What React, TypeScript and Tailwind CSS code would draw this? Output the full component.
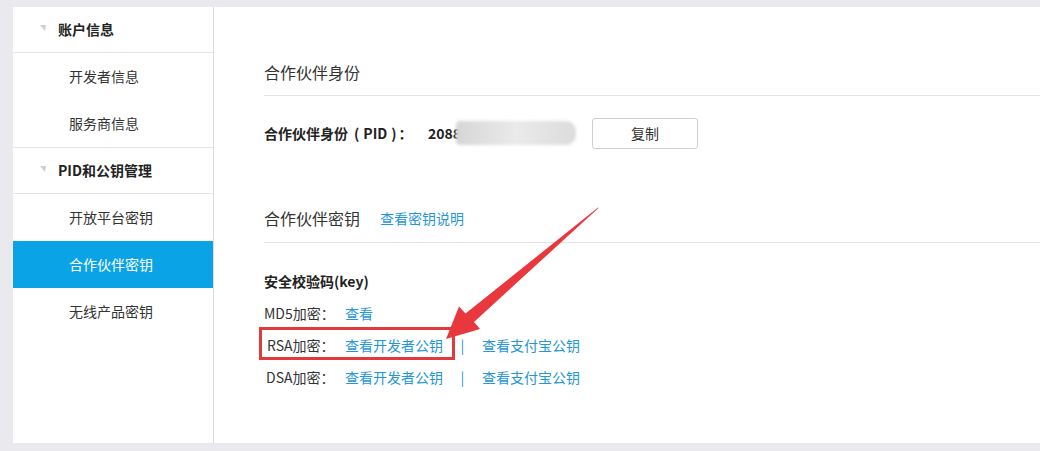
import React from "react";

const font = "font-['Noto_Sans_CJK_SC','Microsoft_YaHei',sans-serif]";

function Caret() {
  return (
    <svg width="6" height="6" viewBox="0 0 6 6" className="mr-[12px] mt-[-4px]">
      <polygon points="0,0 6,0 5,6" fill="#cfcfcf" />
    </svg>
  );
}

function SideHeader({ label }: { label: string }) {
  return (
    <div className="flex items-center h-[46px] pl-[27px] border-b border-[#e3e3e3] text-[14px] font-bold text-[#222]">
      <Caret />
      <span>{label}</span>
    </div>
  );
}

function SideItem({ label, active }: { label: string; active?: boolean }) {
  return (
    <div
      className={
        active
          ? "flex items-center h-[47px] pl-[56px] text-[14px] text-white bg-[#0aa3e6]"
          : "flex items-center h-[47px] pl-[56px] text-[14px] text-[#333]"
      }
    >
      {label}
    </div>
  );
}

function Arrow() {
  return (
    <svg
      className="absolute left-0 top-0 pointer-events-none"
      width="1040"
      height="451"
      viewBox="0 0 1040 451"
    >
      <polygon
        points="598.5,208 474,322 480,329 446,339 459,306.5 465.5,313.5 598,207.5"
        fill="#e8383d"
      />
    </svg>
  );
}

export default function App() {
  return (
    <div className={`relative w-[1040px] h-[451px] overflow-hidden bg-[#e9e9ee] pt-[7px] pl-[13px] ${font}`}>
      <div className="flex h-[436px]">
        {/* sidebar */}
        <div className="w-[201px] h-full bg-white border-r border-[#dcdcdc]">
          <SideHeader label="账户信息" />
          <div className="border-b border-[#e3e3e3]">
            <SideItem label="开发者信息" />
            <SideItem label="服务商信息" />
          </div>
          <SideHeader label="PID和公钥管理" />
          <SideItem label="开放平台密钥" />
          <SideItem label="合作伙伴密钥" active />
          <SideItem label="无线产品密钥" />
        </div>

        {/* main */}
        <div className="flex-1 h-full bg-white pl-[50px] pt-[53px] text-[#333]">
          <div className="border-b border-[#e3e3e3] pb-[11px] text-[16px] leading-[24px]">合作伙伴身份</div>

          <div className="flex items-center h-[30px] mt-[22px] text-[14px]">
            <div className="w-[164px] flex font-bold text-[#222]">
              <span>合作伙伴身份</span>
              <span className="ml-[6px]">(</span>
              <span className="ml-[4px]">PID</span>
              <span className="ml-[4px]">)</span>
              <span className="ml-[2px]">：</span>
            </div>
            <div className="w-[164px] flex items-center">
              <span className="font-bold text-[#222]">2088</span>
              <div className="-ml-[5px] w-[120px] h-[24px] rounded-r-[10px] rounded-l-[4px] blur-[1.5px] bg-gradient-to-r from-[#d6d6d6] via-[#eaeaea] to-[#dcdcdc]" />
            </div>
            <button className="w-[106px] h-[31px] border border-[#cfcfcf] rounded-[3px] bg-white text-[14px] text-[#333]">
              复制
            </button>
          </div>

          <div className="flex items-center mt-[58px] border-b border-[#e3e3e3] pb-[12px] leading-[24px]">
            <span className="text-[16px]">合作伙伴密钥</span>
            <span className="ml-[20px] text-[14px] text-[#2497d5]">查看密钥说明</span>
          </div>

          <div className="mt-[22px] text-[14px]">
            <div className="flex items-center h-[32px] font-bold text-[#222]">安全校验码(key)</div>
            <div className="flex items-center h-[32px]">
              <span className="w-[81px]">MD5加密：</span>
              <span className="text-[#2497d5]">查看</span>
            </div>
            <div className="relative flex items-center h-[32px]">
              <div className="absolute left-[-5px] top-[-2px] w-[196px] h-[33px] border-[3px] border-[#e0393e]" />
              <span className="w-[81px] pl-[3px]">RSA加密：</span>
              <span className="w-[98px] text-[#2497d5]">查看开发者公钥</span>
              <span className="w-[39px] text-center text-[#2497d5]">|</span>
              <span className="text-[#2497d5]">查看支付宝公钥</span>
            </div>
            <div className="flex items-center h-[32px]">
              <span className="w-[81px] pl-[2px]">DSA加密：</span>
              <span className="w-[98px] text-[#2497d5]">查看开发者公钥</span>
              <span className="w-[39px] text-center text-[#2497d5]">|</span>
              <span className="text-[#2497d5]">查看支付宝公钥</span>
            </div>
          </div>
        </div>
      </div>
      <Arrow />
    </div>
  );
}
